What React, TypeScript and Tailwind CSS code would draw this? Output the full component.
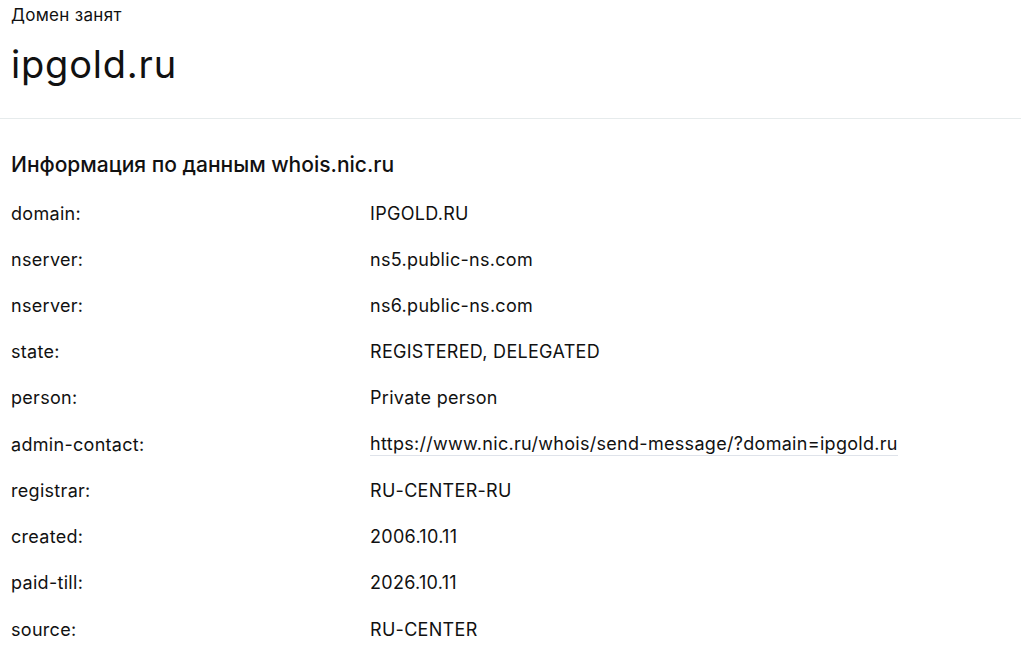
const rows: [string, string, boolean?][] = [
  ["domain:", "IPGOLD.RU"],
  ["nserver:", "ns5.public-ns.com"],
  ["nserver:", "ns6.public-ns.com"],
  ["state:", "REGISTERED, DELEGATED"],
  ["person:", "Private person"],
  ["admin-contact:", "https://www.nic.ru/whois/send-message/?domain=ipgold.ru", true],
  ["registrar:", "RU-CENTER-RU"],
  ["created:", "2006.10.11"],
  ["paid-till:", "2026.10.11"],
  ["source:", "RU-CENTER"],
];

export default function App() {
  return (
    <div className="min-h-screen bg-white text-[#111] font-['Inter',sans-serif]">
      <div className="px-[11px] pt-[4px] pb-[30px]">
        <div className="text-[17px] leading-[22px] tracking-[0.3px]">Домен занят</div>
        <h1 className="mt-[14px] text-[38px] leading-[48px] font-normal tracking-[0.8px]">ipgold.ru</h1>
      </div>
      <div className="h-px bg-[#e6ebec]" />
      <div className="px-[11px] pt-[32px]">
        <h2 className="text-[21px] leading-[28px] font-medium">Информация по данным whois.nic.ru</h2>
        <div className="mt-[11px]">
          {rows.map(([k, v, link], i) => (
            <div key={i} className="flex h-[46.22px] items-center text-[18px] tracking-[0.3px]">
              <div className="w-[359px] shrink-0">{k}</div>
              {link ? (
                <a className="border-b border-[#dfe3ea] leading-[22px]">{v}</a>
              ) : (
                <div>{v}</div>
              )}
            </div>
          ))}
        </div>
      </div>
    </div>
  );
}
